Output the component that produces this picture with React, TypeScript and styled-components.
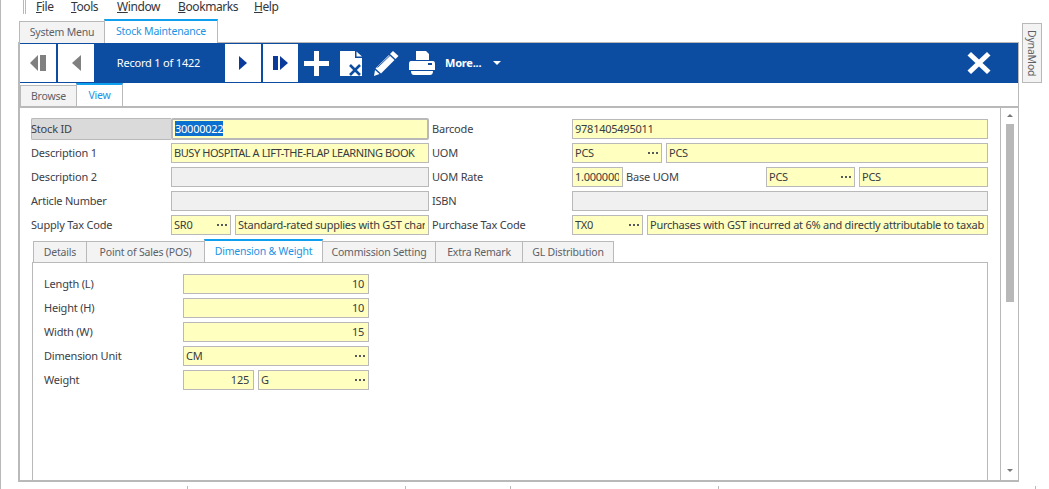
import React from "react";
import styled, { createGlobalStyle } from "styled-components";

const LINE = "#b9b9b9";
const BLUE = "#0d4da1";
const ACCENT = "#0ea0ee";
const FIELD = "#ffffbf";
const TEXT = "#3c4046";

const Global = createGlobalStyle`
  html, body { margin: 0; padding: 0; background: #fff; overflow: hidden; }
  body { font-family: "Noto Sans", "Open Sans", sans-serif; font-size: 11px; letter-spacing: -0.2px; color: ${TEXT}; }
`;

const Page = styled.div`
  width: 1049px;
  height: 489px;
  box-sizing: border-box;
  border-left: 1px solid ${LINE};
  overflow: hidden;
  display: flex;
  flex-direction: column;
`;

const MenuBar = styled.div`
  height: 13px;
  margin-left: 22px;
  display: flex;
  align-items: center;
  font-size: 12px;
  letter-spacing: -0.4px;
  color: #33363b;
`;
const MenuGrip = styled.div`
  width: 1px;
  height: 14px;
  border-left: 1px solid ${LINE};
  border-right: 1px solid ${LINE};
  margin-right: 10px;
`;
const MenuItem = styled.span<{ $w: number }>`
  width: ${(p) => p.$w}px;
  line-height: 13px;
  white-space: nowrap;
`;

const Workspace = styled.div`
  display: flex;
  margin: 6px 0 0 17px;
  height: 463px;
`;
const MainColumn = styled.div`
  width: 1001px;
  display: flex;
  flex-direction: column;
`;
const TabStrip = styled.div<{ $indent?: number }>`
  display: flex;
  align-items: flex-end;
  height: 24px;
  flex: none;
  padding-left: ${(p) => p.$indent ?? 0}px;
  position: relative;
`;
const Tab = styled.div<{ $w: number; $active?: boolean }>`
  width: ${(p) => p.$w}px;
  box-sizing: border-box;
  height: ${(p) => (p.$active ? 24 : 22)}px;
  display: flex;
  align-items: center;
  justify-content: center;
  white-space: nowrap;
  font-size: 10.5px;
  background: ${(p) => (p.$active ? "#fff" : "#f3f3f3")};
  color: ${(p) => (p.$active ? "#1b93e4" : "#5d6167")};
  border: 1px solid ${LINE};
  border-bottom: none;
  border-top: ${(p) => (p.$active ? `2px solid ${ACCENT}` : `1px solid ${LINE}`)};
  margin-left: -1px;
  padding-bottom: 2px;
`;

const Panel = styled.div`
  flex: 1;
  min-height: 0;
  display: flex;
  flex-direction: column;
  border-top: 1px solid ${LINE};
  border-left: 2px solid ${LINE};
  border-right: 1px solid ${LINE};
  border-bottom: 2px solid ${LINE};
  margin-top: -1px;
`;

const Toolbar = styled.div`
  flex: none;
  height: 40px;
  background: ${BLUE};
  display: flex;
  align-items: center;
  color: #fff;
`;
const NavButton = styled.div<{ $w?: number }>`
  width: ${(p) => p.$w ?? 36}px;
  height: 38px;
  background: #fff;
  margin-right: 2px;
  display: flex;
  align-items: center;
  justify-content: center;
  flex: none;
`;
const RecordLabel = styled.div`
  width: 131px;
  margin-left: -3px;
  padding-right: 1px;
  padding-bottom: 1px;
  text-align: center;
  font-size: 11px;
  flex: none;
`;
const ActionIcon = styled.div<{ $w: number; $ml: number }>`
  width: ${(p) => p.$w}px;
  margin-left: ${(p) => p.$ml}px;
  height: 25px;
  flex: none;
  display: flex;
`;
const MoreLabel = styled.div`
  margin-left: 10px;
  width: 48px;
  padding-bottom: 1px;
  font-size: 11px;
  font-weight: 700;
  flex: none;
  white-space: nowrap;
`;
const Caret = styled.div`
  width: 0;
  height: 0;
  border-left: 4px solid transparent;
  border-right: 4px solid transparent;
  border-top: 4px solid #fff;
  flex: none;
`;
const CloseIcon = styled.div`
  margin-left: auto;
  margin-right: 27px;
  width: 24px;
  height: 24px;
  display: flex;
`;

const ViewTabs = styled.div`
  flex: none;
  height: 24px;
  display: flex;
  align-items: flex-end;
  padding-left: 1px;
`;

const ViewBody = styled.div`
  flex: 1;
  min-height: 0;
  display: flex;
  border-top: 2px solid ${LINE};
  margin-top: -1px;
`;
const Content = styled.div`
  width: 980px;
  box-sizing: border-box;
  flex: none;
  padding: 11px 12px 0 11px;
  display: flex;
  flex-direction: column;
`;
const ScrollBar = styled.div`
  flex: 1;
  border-left: 1px solid ${LINE};
  display: flex;
  flex-direction: column;
  align-items: center;
  padding-top: 6px;
  padding-bottom: 8px;
`;
const ArrowUp = styled.div`
  width: 0;
  height: 0;
  border-left: 3px solid transparent;
  border-right: 3px solid transparent;
  border-bottom: 3px solid #777;
`;
const ArrowDown = styled.div`
  width: 0;
  height: 0;
  border-left: 3px solid transparent;
  border-right: 3px solid transparent;
  border-top: 3px solid #777;
  margin-top: auto;
`;
const Thumb = styled.div`
  width: 8px;
  height: 178px;
  background: #b8b8b8;
  margin-top: 7px;
`;

const HeaderGrid = styled.div`
  display: grid;
  grid-template-columns: 140px 258px 143px 1fr;
  grid-auto-rows: 20px;
  row-gap: 4px;
  flex: none;
`;
const Label = styled.div<{ $indent?: number }>`
  display: flex;
  align-items: center;
  white-space: nowrap;
  box-sizing: border-box;
  padding-bottom: 2px;
  padding-left: ${(p) => p.$indent ?? 0}px;
`;
const KeyLabel = styled(Label)`
  background: #dadada;
  border: 1px solid ${LINE};
  border-right: none;
  border-radius: 2px 0 0 2px;
  margin: -1px 0;
  text-indent: -1px;
`;
const Field = styled.div<{ $w?: number; $disabled?: boolean; $right?: boolean; $focus?: boolean }>`
  box-sizing: border-box;
  ${(p) => (p.$w ? `width: ${p.$w}px; flex: none;` : "flex: 1; min-width: 0;")}
  height: ${(p) => (p.$focus ? 22 : 20)}px;
  margin: ${(p) => (p.$focus ? "-1px 0" : 0)};
  background: ${(p) => (p.$disabled ? "#f0f0f0" : FIELD)};
  border: ${(p) => (p.$focus ? 2 : 1)}px solid ${LINE};
  border-radius: ${(p) => (p.$focus ? 2 : 0)}px;
  padding: 0 ${(p) => (p.$right ? 4 : 3)}px 0 2px;
  display: flex;
  align-items: center;
  gap: 4px;
  color: #383c42;
  letter-spacing: -0.25px;
  justify-content: ${(p) => (p.$right ? "flex-end" : "flex-start")};
`;
const Value = styled.span<{ $caps?: boolean }>`
  flex: 1;
  min-width: 0;
  overflow: hidden;
  white-space: nowrap;
  position: relative;
  top: -1px;
  ${(p) => (p.$caps ? "letter-spacing: -0.42px;" : "")}
`;
const PlainValue = styled.span`
  white-space: nowrap;
  position: relative;
  top: -1px;
`;
const Selected = styled.span`
  background: #0a6fce;
  color: #fff;
`;
const Dots = styled.svg`
  width: 10px;
  height: 2px;
  flex: none;
`;
const Pair = styled.div`
  display: flex;
  gap: 4px;
  min-width: 0;
`;
const InlineLabel = styled.div<{ $w: number }>`
  width: ${(p) => p.$w}px;
  flex: none;
  display: flex;
  align-items: center;
  white-space: nowrap;
  margin-left: -1px;
  box-sizing: border-box;
  padding-bottom: 2px;
`;

const DetailTabs = styled.div`
  flex: none;
  height: 24px;
  margin-top: 4px;
  display: flex;
  align-items: flex-end;
  padding-left: 3px;
`;
const DetailBody = styled.div`
  flex: 1;
  margin-left: 1px;
  border: 1px solid ${LINE};
  border-bottom: none;
  margin-top: -1px;
  padding: 11px 11px 0;
  display: grid;
  grid-template-columns: 139px 186px;
  grid-auto-rows: 20px;
  row-gap: 4px;
  align-content: start;
`;

const DynaTab = styled.div`
  box-sizing: border-box;
  width: 20px;
  height: 60px;
  margin: 4px 0 0 3px;
  flex: none;
  background: #f3f3f3;
  border: 1px solid ${LINE};
  writing-mode: vertical-rl;
  display: flex;
  align-items: center;
  justify-content: center;
  font-size: 10.5px;
  color: #5d6167;
`;

const StatusBar = styled.div`
  display: flex;
  height: 3px;
  margin-top: 4px;
  flex: none;
`;
const StatusCell = styled.div<{ $w: number }>`
  width: ${(p) => p.$w}px;
  flex: none;
  box-sizing: border-box;
  border-right: 1px solid ${LINE};
`;

const More = () => (
  <Dots viewBox="0 0 10 2">
    <rect x="0" width="2" height="2" fill="#55585d" />
    <rect x="4" width="2" height="2" fill="#55585d" />
    <rect x="8" width="2" height="2" fill="#55585d" />
  </Dots>
);

const Lookup = ({ w, children }: { w?: number; children: React.ReactNode }) => (
  <Field $w={w}>
    <Value>{children}</Value>
    <More />
  </Field>
);
const Text = ({ w, caps, children }: { w?: number; caps?: boolean; children: React.ReactNode }) => (
  <Field $w={w}>
    <Value $caps={caps}>{children}</Value>
  </Field>
);
const Num = ({ w, children }: { w?: number; children: React.ReactNode }) => (
  <Field $w={w} $right>
    <PlainValue>{children}</PlainValue>
  </Field>
);

const GRAY = "#808080";
const NAVY = "#0a3a9c";

export default function App() {
  return (
    <Page>
      <Global />
      <MenuBar>
        <MenuGrip />
        <MenuItem $w={35}><u>F</u>ile</MenuItem>
        <MenuItem $w={46}><u>T</u>ools</MenuItem>
        <MenuItem $w={61}><u>W</u>indow</MenuItem>
        <MenuItem $w={76}><u>B</u>ookmarks</MenuItem>
        <MenuItem $w={40}><u>H</u>elp</MenuItem>
      </MenuBar>
      <Workspace>
        <MainColumn>
          <TabStrip $indent={2}>
            <Tab $w={86}>System Menu</Tab>
            <Tab $w={114} $active>Stock Maintenance</Tab>
          </TabStrip>
          <Panel>
            <Toolbar>
              <NavButton>
                <svg width="16" height="16" viewBox="0 0 16 16">
                  <path d="M0 8 L8 0 V16 Z" fill={GRAY} />
                  <rect x="10" y="0" width="6" height="16" fill={GRAY} />
                </svg>
              </NavButton>
              <NavButton>
                <svg width="9" height="16" viewBox="0 0 9 16">
                  <path d="M0 8 L9 0 V16 Z" fill={GRAY} />
                </svg>
              </NavButton>
              <RecordLabel>Record 1 of 1422</RecordLabel>
              <NavButton>
                <svg width="8" height="14" viewBox="0 0 8 14">
                  <path d="M8 7 L0 0 V14 Z" fill={NAVY} />
                </svg>
              </NavButton>
              <NavButton $w={35}>
                <svg width="15" height="14" viewBox="0 0 15 14">
                  <rect x="0" y="0" width="5" height="14" fill={NAVY} />
                  <path d="M15 7 L7 0 V14 Z" fill={NAVY} />
                </svg>
              </NavButton>
              <ActionIcon $w={25} $ml={4}>
                <svg width="25" height="25" viewBox="0 0 25 25">
                  <path d="M10 0 H15 V10 H25 V15 H15 V25 H10 V15 H0 V10 H10 Z" fill="#fff" />
                </svg>
              </ActionIcon>
              <ActionIcon $w={23} $ml={11}>
                <svg width="23" height="25" viewBox="0 0 23 25">
                  <path d="M0 0 H15 V7 H22 V25 H0 Z" fill="#fff" />
                  <path d="M16.5 0.5 L22 5.5 H16.5 Z" fill="#fff" />
                  <path d="M10 14 L20 24 M20 14 L10 24" stroke={BLUE} strokeWidth="2.6" fill="none" />
                </svg>
              </ActionIcon>
              <ActionIcon $w={25} $ml={11}>
                <svg width="25" height="25" viewBox="0 0 25 25">
                  <path d="M19 0 L24.5 5 L21.5 8 L16 3 Z" fill="#fff" />
                  <path d="M15 4 L20.5 9 L7 22.5 L1.5 17.5 Z" fill="#fff" />
                  <path d="M1 19 L5.5 23 L0 25 Z" fill="#fff" />
                  <path d="M3.5 16.5 L16 4.5" stroke={BLUE} strokeWidth="0.9" />
                </svg>
              </ActionIcon>
              <ActionIcon $w={26} $ml={10}>
                <svg width="26" height="25" viewBox="0 0 26 25">
                  <path d="M7 0 H17 L20 3 V9 H7 Z" fill="#fff" />
                  <path d="M2 10 H24 Q26 10 26 13 V19 H0 V13 Q0 10 2 10 Z" fill="#fff" />
                  <rect x="19" y="12" width="4" height="2" fill={BLUE} />
                  <path d="M2 20 H24 Q24 24 21 24 H5 Q2 24 2 20 Z" fill="#fff" />
                  <rect x="1" y="19" width="24" height="1" fill={BLUE} />
                </svg>
              </ActionIcon>
              <MoreLabel>More...</MoreLabel>
              <Caret />
              <CloseIcon>
                <svg width="24" height="24" viewBox="0 0 24 24">
                  <path d="M4 1 L12 8.5 L20 1 L23.5 4.5 L15.5 12 L23.5 19.5 L20 23 L12 15.5 L4 23 L0.5 19.5 L8.5 12 L0.5 4.5 Z" fill="#fff" />
                </svg>
              </CloseIcon>
            </Toolbar>
            <ViewTabs>
              <Tab $w={57}>Browse</Tab>
              <Tab $w={47} $active>View</Tab>
            </ViewTabs>
            <ViewBody>
              <Content>
                <HeaderGrid>
                  <KeyLabel>Stock ID</KeyLabel>
                  <Field $focus><Value><Selected>30000022</Selected></Value></Field>
                  <Label $indent={3}>Barcode</Label>
                  <Text>9781405495011</Text>

                  <Label>Description 1</Label>
                  <Text caps>BUSY HOSPITAL A LIFT-THE-FLAP LEARNING BOOK</Text>
                  <Label $indent={3}>UOM</Label>
                  <Pair>
                    <Lookup w={90}>PCS</Lookup>
                    <Text>PCS</Text>
                  </Pair>

                  <Label>Description 2</Label>
                  <Field $disabled />
                  <Label $indent={3}>UOM Rate</Label>
                  <Pair>
                    <Text w={51}>1.00000000</Text>
                    <InlineLabel $w={136}>Base UOM</InlineLabel>
                    <Lookup w={89}>PCS</Lookup>
                    <Text>PCS</Text>
                  </Pair>

                  <Label>Article Number</Label>
                  <Field $disabled />
                  <Label $indent={3}>ISBN</Label>
                  <Field $disabled />

                  <Label>Supply Tax Code</Label>
                  <Pair>
                    <Lookup w={60}>SR0</Lookup>
                    <Text>Standard-rated supplies with GST charged at 6%</Text>
                  </Pair>
                  <Label $indent={3}>Purchase Tax Code</Label>
                  <Pair>
                    <Lookup w={71}>TX0</Lookup>
                    <Text>Purchases with GST incurred at 6% and directly attributable to taxable supplies</Text>
                  </Pair>
                </HeaderGrid>
                <DetailTabs>
                  <Tab $w={54}>Details</Tab>
                  <Tab $w={119}>Point of Sales (POS)</Tab>
                  <Tab $w={119} $active>Dimension &amp; Weight</Tab>
                  <Tab $w={114}>Commission Setting</Tab>
                  <Tab $w={88}>Extra Remark</Tab>
                  <Tab $w={92}>GL Distribution</Tab>
                </DetailTabs>
                <DetailBody>
                  <Label>Length (L)</Label>
                  <Num>10</Num>
                  <Label>Height (H)</Label>
                  <Num>10</Num>
                  <Label>Width (W)</Label>
                  <Num>15</Num>
                  <Label>Dimension Unit</Label>
                  <Lookup>CM</Lookup>
                  <Label>Weight</Label>
                  <Pair>
                    <Num w={71}>125</Num>
                    <Lookup>G</Lookup>
                  </Pair>
                </DetailBody>
              </Content>
              <ScrollBar>
                <ArrowUp />
                <Thumb />
                <ArrowDown />
              </ScrollBar>
            </ViewBody>
          </Panel>
        </MainColumn>
        <DynaTab>DynaMod</DynaTab>
      </Workspace>
      <StatusBar>
        <StatusCell $w={187} />
        <StatusCell $w={218} />
        <StatusCell $w={105} />
        <StatusCell $w={208} />
        <StatusCell $w={317} />
      </StatusBar>
    </Page>
  );
}
